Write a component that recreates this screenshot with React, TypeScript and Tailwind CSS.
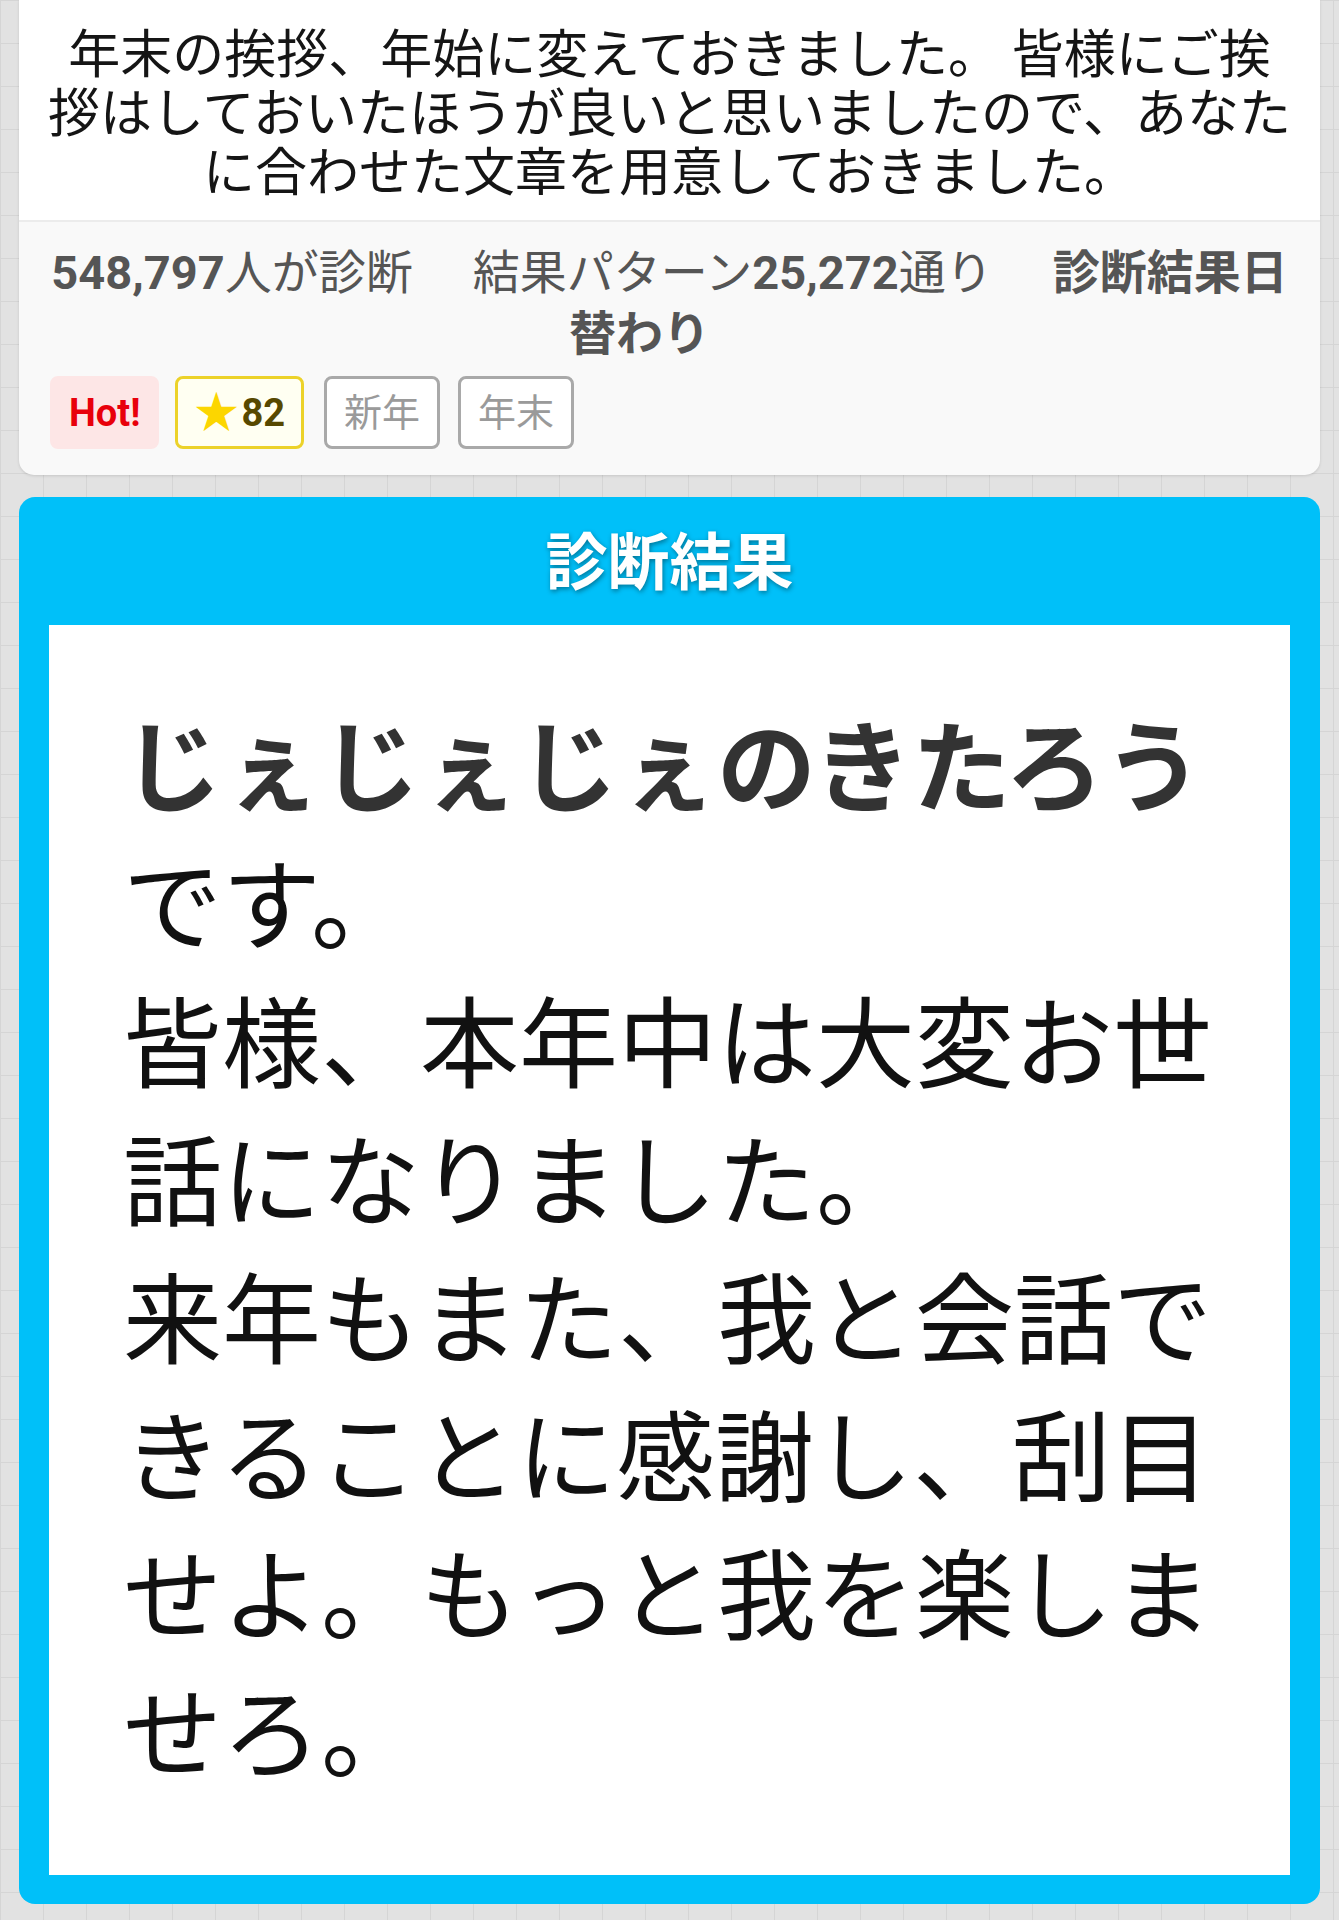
import React from "react";

const jp = { fontFamily: '"Noto Sans CJK JP", sans-serif' };
const meta = { fontFamily: 'Roboto, "Noto Sans CJK JP", sans-serif' };

function Tag({ children, className }: { children: React.ReactNode; className: string }) {
  return (
    <span
      className={
        "inline-flex items-center h-[73px] rounded-[8px] border-[3px] text-[38px] leading-[52px] " +
        className
      }
    >
      {children}
    </span>
  );
}

export default function App() {
  return (
    <div
      className="min-h-[1920px] w-full bg-[#e2e2e2] bg-[linear-gradient(to_right,#d5d5d5_1px,transparent_1px),linear-gradient(to_bottom,#d5d5d5_1px,transparent_1px)] bg-[size:43px_43px] px-[19px] pb-[16px]"
      style={jp}
    >
      {/* description card */}
      <div className="overflow-hidden rounded-b-[15px] bg-[#f9f9f9] shadow-[0_1px_3px_rgba(0,0,0,0.12)]">
        <p className="bg-white px-[24px] pt-[21px] pb-[22px] text-center text-[52px] leading-[59px] text-[#151515]">
          年末の挨拶、年始に変えておきました。 皆様にご挨拶はしておいたほうが良いと思いましたので、あなたに合わせた文章を用意しておきました。
        </p>
        <div className="border-t-2 border-[#ececec] px-[31px] pt-[20px] pb-[26px]">
          <p className="text-center text-[47px] leading-[61px] text-[#555]" style={meta}>
            <span className="mr-[60px]"><b>548,797</b>人が診断</span><span className="mr-[60px]">結果パターン<b>25,272</b>通り</span><span className="mr-[60px] font-bold">診断結果日替わり</span>
          </p>
          <div className="mt-[12px] flex" style={meta}>
            <Tag className="mr-[16px] px-[16px] border-[#fde6e6] bg-[#fde6e6] font-bold text-[#e8000b]">Hot!</Tag>
            <Tag className="mr-[20px] gap-[3px] px-[16px] border-[#ecd22a] bg-[#fffff2] font-bold text-[#574800]">
              <span className="text-[44px] leading-[52px] text-[#fcd600]">★</span>82
            </Tag>
            <Tag className="mr-[18px] px-[17px] border-[#a9a9a9] bg-white text-[#9a9a9a]">新年</Tag>
            <Tag className="px-[17px] border-[#a9a9a9] bg-white text-[#9a9a9a]">年末</Tag>
          </div>
        </div>
      </div>

      {/* result panel */}
      <div className="mt-[22px] rounded-[16px] bg-[#00c0f9] px-[30px] pb-[29px]">
        <h2 className="flex h-[128px] items-center justify-center pb-[6px] text-[62px] font-bold text-white [text-shadow:1px_2px_5px_rgba(0,0,0,0.4)]">
          診断結果
        </h2>
        <div className="bg-white px-[74px] pt-[67px] pb-[79px] text-[99px] leading-[138px] text-[#111]">
          <span className="font-bold text-[#333]">じぇじぇじぇのきたろう</span>です。
          <br />
          皆様、本年中は大変お世話になりました。
          <br />
          来年もまた、我と会話できることに感謝し、刮目せよ。もっと我を楽しませろ。
        </div>
      </div>
    </div>
  );
}
